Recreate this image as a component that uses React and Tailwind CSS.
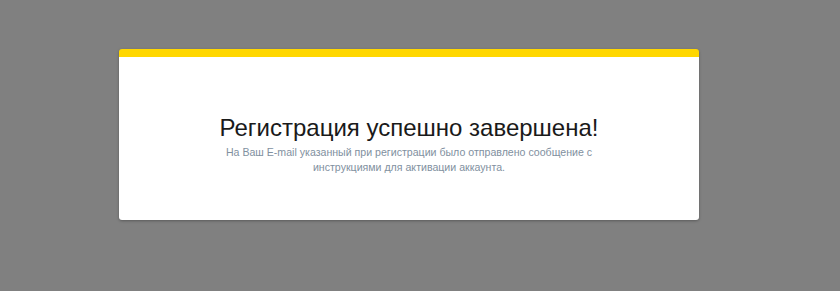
export default function App() {
  return (
    <div className="min-h-[291px] bg-[#808080] pt-[49px] pl-[119px]" style={{ fontFamily: '"Liberation Sans", Arial, sans-serif' }}>
      <div className="w-[580px] h-[171px] bg-white rounded-[3px] border-t-[8px] border-[#ffd700] shadow-[0_1px_3px_rgba(0,0,0,0.3)] flex flex-col items-center pt-[57px]">
        <h1 className="text-[24px] leading-[28px] text-[#1a1a1a] font-normal">Регистрация успешно завершена!</h1>
        <p className="mt-[3px] text-[10.6px] leading-[15px] text-[#8190a0] text-center w-[380px]">
          На Ваш E-mail указанный при регистрации было отправлено сообщение с инструкциями для активации аккаунта.
        </p>
      </div>
    </div>
  );
}
